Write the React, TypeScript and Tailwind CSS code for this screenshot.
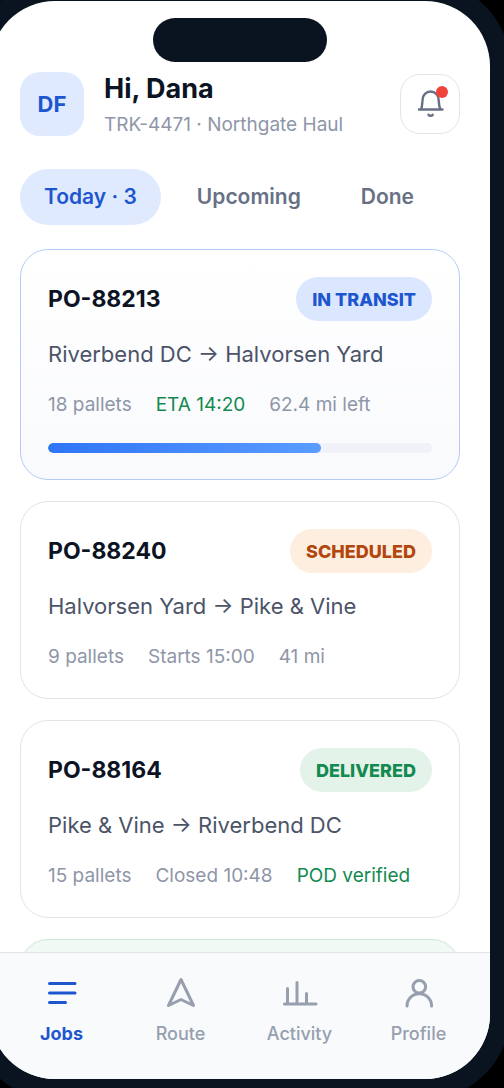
import { useState } from 'react';
import type { ReactNode } from 'react';
import clsx from 'clsx';

type JobStatus = 'transit' | 'scheduled' | 'delivered';

interface Job {
  po: string;
  status: JobStatus;
  from: string;
  to: string;
  meta: { text: string; good?: boolean }[];
  progress?: number;
}

const JOBS: Job[] = [
  {
    po: 'PO-88213',
    status: 'transit',
    from: 'Riverbend DC',
    to: 'Halvorsen Yard',
    meta: [{ text: '18 pallets' }, { text: 'ETA 14:20', good: true }, { text: '62.4 mi left' }],
    progress: 71,
  },
  {
    po: 'PO-88240',
    status: 'scheduled',
    from: 'Halvorsen Yard',
    to: 'Pike & Vine',
    meta: [{ text: '9 pallets' }, { text: 'Starts 15:00' }, { text: '41 mi' }],
  },
  {
    po: 'PO-88164',
    status: 'delivered',
    from: 'Pike & Vine',
    to: 'Riverbend DC',
    meta: [{ text: '15 pallets' }, { text: 'Closed 10:48' }, { text: 'POD verified', good: true }],
  },
];

const STATUS: Record<JobStatus, { label: string; className: string }> = {
  transit: { label: 'IN TRANSIT', className: 'bg-[#dbe7fe] text-[#1d56cf]' },
  scheduled: { label: 'SCHEDULED', className: 'bg-[#feeee0] text-[#b2460c]' },
  delivered: { label: 'DELIVERED', className: 'bg-[#e4f3ea] text-[#128a50]' },
};

const TABS = ['Today · 3', 'Upcoming', 'Done'];

function NavIcon({ children }: { children: ReactNode }) {
  return (
    <svg
      className="size-9"
      viewBox="0 0 36 36"
      fill="none"
      stroke="currentColor"
      strokeWidth="3"
      strokeLinecap="round"
      strokeLinejoin="round"
      aria-hidden="true"
    >
      {children}
    </svg>
  );
}

const NAV = [
  { label: 'Jobs', icon: <path d="M5.5 8.5H31M5.5 18H31M5.500 27.500h16" /> },
  { label: 'Route', icon: <path d="M18 4.5l12.5 26L18 24.5l-12.5 6z" /> },
  { label: 'Activity', icon: <path d="M2.5 29H34M5.5 29V13.5M15 29V7.5M24.5 29V18.5" /> },
  {
    label: 'Profile',
    icon: (
      <>
        <circle cx="18.3" cy="11.8" r="6.3" />
        <path d="M6 31a12.3 12.3 0 0 1 24.6 0" />
      </>
    ),
  },
];

function Header() {
  return (
    <header className="mt-[9px] flex items-center gap-5">
      <div className="flex size-16 items-center justify-center rounded-[20px] bg-[#dfeafe] text-[22px] font-bold text-[#1d56cf]">
        DF
      </div>
      <div className="flex-1 pt-0.5">
        <h1 className="text-[27px] leading-8 font-bold text-[#0c1424]">Hi, Dana</h1>
        <p className="mt-2 text-[19px] leading-6 text-[#8e96a8]">TRK-4471 · Northgate Haul</p>
      </div>
      <button
        type="button"
        aria-label="Notifications"
        className="relative flex size-[60px] items-center justify-center rounded-[20px] border border-[#e2e4e8] text-[#687085]"
      >
        <svg
          className="size-[30px]"
          viewBox="0 0 30 30"
          fill="none"
          stroke="currentColor"
          strokeWidth="2.4"
          strokeLinecap="round"
        >
          <path d="M4 20.5H27.500M6 20.500C7.300 17.500 7.300 14 7.600 10.500a8 8 0 0 1 16 0C23.900 14 23.900 17.500 25.500 20.500" />
          <path d="M13.500 25.800c.8 1.300 3.400 1.300 4.200 0" />
        </svg>
        <span className="absolute top-[11px] right-[11px] size-3 rounded-full bg-[#f0443a]" />
      </button>
    </header>
  );
}

function JobCard({ job }: { job: Job }) {
  const status = STATUS[job.status];
  return (
    <article
      className={clsx(
        'rounded-[28px] border p-[27px] pb-[26px]',
        job.status === 'transit'
          ? 'border-[#b3cbf6] bg-linear-to-b from-white to-[#f9fafd]'
          : 'border-[#e2e4e8] bg-white',
      )}
    >
      <div className="flex items-center justify-between">
        <h2 className="text-[23px] font-bold text-[#0c1424]">{job.po}</h2>
        <span className={clsx('flex h-11 items-center rounded-full px-4 text-[18px] font-extrabold', status.className)}>
          {status.label}
        </span>
      </div>
      <p className="mt-[18px] text-[22px] leading-[30px] whitespace-nowrap text-[#4c5468]">
        {job.from} → {job.to}
      </p>
      <div className="mt-[21px] flex gap-6 text-[19px] leading-[30px] whitespace-nowrap text-[#8e96a8]">
        {job.meta.map((m) => (
          <span key={m.text} className={clsx(m.good && 'text-[#128a50]')}>
            {m.text}
          </span>
        ))}
      </div>
      {job.progress !== undefined && (
        <div className="mt-[23px] h-2.5 overflow-hidden rounded-full bg-[#f0f1f9]">
          <div
            className="h-full rounded-full bg-linear-to-r from-[#2f74f5] to-[#5a9cff]"
            style={{ width: `${job.progress}%` }}
          />
        </div>
      )}
    </article>
  );
}

export default function App() {
  const [tab, setTab] = useState(TABS[0]);
  const [page, setPage] = useState('Jobs');

  return (
    <div className="flex h-screen flex-col overflow-hidden bg-black font-['Inter',sans-serif]">
      {/* phone frame, runs past the edges of the window */}
      <div className="-mt-[19px] -mr-1.5 -mb-[11px] -ml-[30px] flex min-h-0 flex-1 flex-col rounded-[85px] bg-[#0a1320] p-5">
        <div className="flex min-h-0 flex-1 flex-col overflow-hidden rounded-[65px] bg-white">
          <main className="flex min-h-0 flex-1 flex-col overflow-hidden px-[30px] pt-[17px]">
            <div className="h-11 w-[174px] shrink-0 self-center rounded-full bg-[#0a1320]" />
            <Header />

            <div className="mt-8 flex shrink-0 gap-3">
              {TABS.map((t) => (
                <button
                  key={t}
                  type="button"
                  onClick={() => setTab(t)}
                  className={clsx(
                    'h-14 rounded-full px-6 text-[21px] font-semibold whitespace-nowrap',
                    t === tab ? 'bg-[#dfeafe] text-[#1d56cf]' : 'text-[#687085]',
                  )}
                >
                  {t}
                </button>
              ))}
            </div>

            <section className="mt-6 flex flex-col gap-[21px]">
              {JOBS.map((job) => (
                <JobCard key={job.po} job={job} />
              ))}
              <div className="h-24 shrink-0 rounded-[28px] border border-[#cfe6d7] bg-[#f1f9f4]" />
            </section>
          </main>

          <nav className="flex shrink-0 border-t border-[#e0e4e9] bg-[#f8fafc] px-3 pt-[22px] pb-[31px]">
            {NAV.map(({ label, icon }) => (
              <button
                key={label}
                type="button"
                onClick={() => setPage(label)}
                className={clsx(
                  'flex flex-1 flex-col items-center gap-[9px] text-[18px] leading-7',
                  label === page ? 'font-bold text-[#1d56cf]' : 'font-medium text-[#979eae]',
                )}
              >
                <NavIcon>{icon}</NavIcon>
                {label}
              </button>
            ))}
          </nav>
        </div>
      </div>
    </div>
  );
}
